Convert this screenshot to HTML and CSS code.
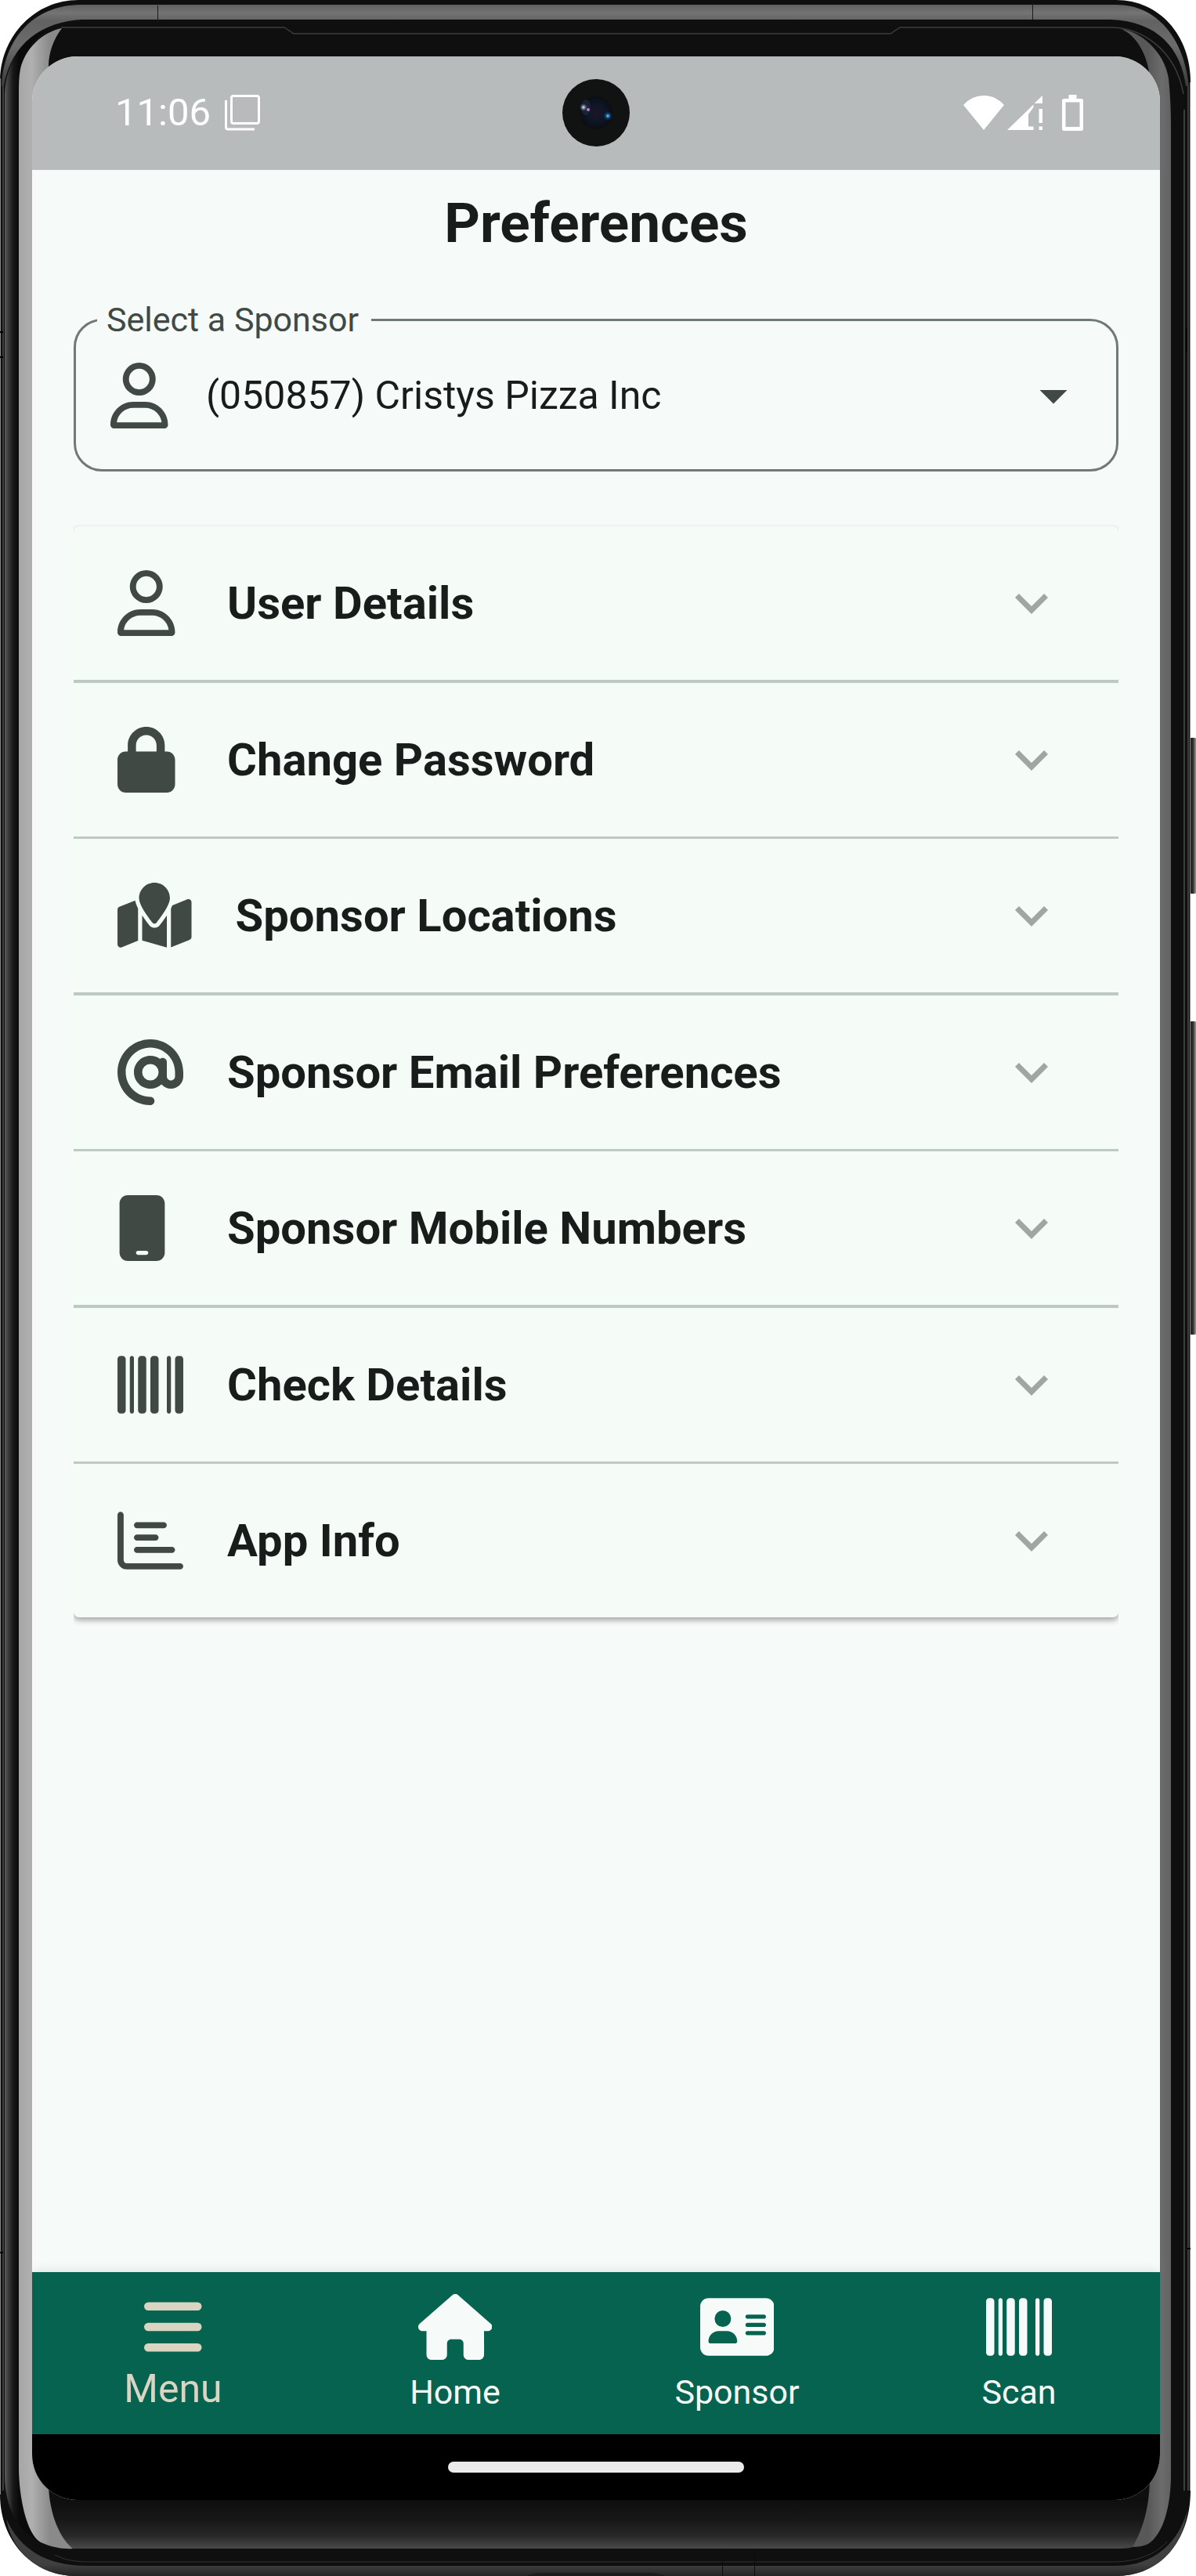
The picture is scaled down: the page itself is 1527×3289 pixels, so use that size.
FILE: index.html
```html
<!DOCTYPE html>
<html lang="en">
<head>
<meta charset="utf-8">
<meta name="viewport" content="width=device-width, initial-scale=1">
<title>Preferences</title>
<link rel="stylesheet" href="styles.css">
</head>
<body>
<div class="device">
  <svg class="device-frame" viewBox="0 0 1527 3289" preserveAspectRatio="none" aria-hidden="true">
    <defs>
      <linearGradient id="rim-top" gradientUnits="userSpaceOnUse" x1="0" y1="6" x2="0" y2="110">
        <stop offset="0" stop-color="#606060"/><stop offset=".1" stop-color="#747474"/><stop offset=".2" stop-color="#626262"/><stop offset=".5" stop-color="#6c6c6c"/><stop offset="1" stop-color="#3a3a3a"/>
      </linearGradient>
      <linearGradient id="side-left" gradientUnits="userSpaceOnUse" x1="6" y1="0" x2="24" y2="0">
        <stop offset="0" stop-color="#5c5c5c"/><stop offset=".25" stop-color="#3c3c3c"/><stop offset=".6" stop-color="#181818"/><stop offset="1" stop-color="#0a0a0a"/>
      </linearGradient>
      <linearGradient id="glass-left" gradientUnits="userSpaceOnUse" x1="24" y1="0" x2="64" y2="0">
        <stop offset="0" stop-color="#a6a6a6"/><stop offset=".4" stop-color="#b0b0b0"/><stop offset="1" stop-color="#8a8a8a"/>
      </linearGradient>
      <linearGradient id="glass-right" gradientUnits="userSpaceOnUse" x1="1466" y1="0" x2="1495" y2="0">
        <stop offset="0" stop-color="#585858"/><stop offset=".6" stop-color="#6c6c6c"/><stop offset="1" stop-color="#626262"/>
      </linearGradient>
      <linearGradient id="chin" gradientUnits="userSpaceOnUse" x1="0" y1="3190" x2="0" y2="3254">
        <stop offset="0" stop-color="#0e0e0e"/><stop offset=".4" stop-color="#161616"/><stop offset=".75" stop-color="#282828"/><stop offset="1" stop-color="#4a4a4a"/>
      </linearGradient>
      <linearGradient id="rim-bottom" gradientUnits="userSpaceOnUse" x1="0" y1="3274" x2="0" y2="3289">
        <stop offset="0" stop-color="#404040"/><stop offset="1" stop-color="#242424"/>
      </linearGradient>
      <linearGradient id="key" x1="0" y1="0" x2="1" y2="0">
        <stop offset="0" stop-color="#1c1c1c"/><stop offset=".5" stop-color="#2a2a2a"/><stop offset=".75" stop-color="#8c8c8c"/><stop offset="1" stop-color="#5a5a5a"/>
      </linearGradient>
    </defs>
    <rect x="1516" y="942" width="14" height="199" rx="5" fill="url(#key)"/>
    <rect x="1516" y="1304" width="14" height="400" rx="5" fill="url(#key)"/>
    <path fill="#0f0f0f" d="M100 0H1425C1480 0 1520 45 1520 105V3180C1520 3245 1480 3289 1425 3289H97C42 3289 0 3245 0 3185V100C2 45 45 0 100 0Z"/>
    <path fill="url(#rim-top)" d="M2 110C5 50 42 7 102 6H1425C1478 6 1512 50 1518 110L1514 110C1508 62 1478 27 1418 25H104C54 28 14 55 5 110Z"/>
    <path fill="none" stroke="#1a1a1a" stroke-width="1" d="M201.500 7V29M1318.500 4V25"/>
    <path fill="none" stroke="#4d4d4d" stroke-width="1.500" d="M4 3180V110M1517 110V3180M1512 3180V140"/>
    <path fill="none" stroke="#8a8a8a" stroke-width="1" d="M.5 100V3185M1519.500 105V3180"/>
    <path fill="url(#side-left)" d="M6 120C8 78 30 48 60 38C38 50 24 80 24 110V3160C24 3200 36 3234 52 3246C22 3232 6 3200 6 3160Z"/>
    <path fill="url(#chin)" d="M62 3190H1470C1468 3215 1458 3240 1446 3252C1440 3254 1430 3254 1420 3254H93C72 3237 62 3205 62 3190Z"/>
    <path fill="url(#glass-left)" d="M79 36C54 41 32 62 26 88C24 98 24 108 24 120V3150C24 3185 33 3235 52 3246C65 3252 80 3255 93 3254C72 3237 62 3200 62 3170V85C62 68 68 50 79 36Z"/>
    <path fill="url(#glass-right)" d="M1431 37C1455 39 1487 66 1492 100C1494 120 1495 140 1495 160V3160C1495 3200 1485 3236 1466 3248C1459 3251 1453 3252 1446 3252C1460 3228 1468 3200 1468 3160V100C1466 70 1450 44 1431 37Z"/>
    <path fill="none" stroke="#3c3c3c" stroke-width="1.500" d="M78 35H363L375 43H1137L1149 35H1420C1455 36 1500 60 1511 120"/>
    <path fill="none" stroke="#333" stroke-width="1" d="M70 3262C85 3270 100 3271 120 3271H1420C1450 3271 1475 3262 1490 3245"/>
    <path fill="url(#rim-bottom)" d="M8 3216C25 3255 60 3276 110 3276H1425C1475 3276 1505 3245 1516 3205C1510 3255 1475 3289 1425 3289H97C50 3289 15 3258 8 3216Z"/>
    <path fill="#1c1c1c" d="M672 3289Q680 3285 695 3285H830Q840 3285 850 3289Z"/>
    <path fill="none" stroke="#0c0c0c" stroke-width="1" d="M922.500 3256V3289M963.500 3256V3289"/>
    <path fill="none" stroke="#000" stroke-width="2" d="M0 424H4M0 456H4M0 2876H4M1515 420V450M1515 2871H1520"/>
  </svg>

  <div class="screen">
    <div class="status-bar">
      <div class="status-left">
        <span class="clock">11:06</span>
        <svg class="status-copy" viewBox="0 0 45 46" aria-hidden="true" fill="none" stroke="#fff" stroke-width="3">
          <rect x="8.500" y="1.500" width="35" height="35" rx="2.500"/>
          <path d="M1.500 7V41.500a2.500 2.500 0 0 0 2.500 2.500H38"/>
        </svg>
      </div>
      <svg class="camera" viewBox="0 0 86 86" aria-hidden="true">
        <defs>
          <radialGradient id="lens"><stop offset="0" stop-color="#1c1626"/><stop offset=".6" stop-color="#0d1626"/><stop offset="1" stop-color="#0c0e10"/></radialGradient>
          <radialGradient id="glint"><stop offset="0" stop-color="#fff"/><stop offset=".4" stop-color="#8d96a8" stop-opacity=".8"/><stop offset="1" stop-color="#4c5a80" stop-opacity="0"/></radialGradient>
          <radialGradient id="blue"><stop offset="0" stop-color="#a8dcff"/><stop offset=".35" stop-color="#12609c"/><stop offset="1" stop-color="#0b2c50" stop-opacity="0"/></radialGradient>
        </defs>
        <circle cx="43" cy="43" r="43" fill="#101312"/>
        <circle cx="43" cy="43" r="21" fill="url(#lens)"/>
        <ellipse cx="30" cy="36" rx="6" ry="10" fill="#27304f" opacity=".5"/>
        <circle cx="27" cy="36" r="5" fill="url(#glint)"/>
        <circle cx="33" cy="39" r="2" fill="#b583c0"/>
        <circle cx="58" cy="47" r="6" fill="url(#blue)"/>
      </svg>
      <div class="status-right">
        <svg class="status-wifi" viewBox="0 0 52 44" aria-hidden="true"><path fill="#fff" d="M26 44L0 12Q11 0 26 0T52 12Z"/></svg>
        <svg class="status-signal" viewBox="0 0 45 44" aria-hidden="true"><path fill="#fff" d="M45 0V10H34.500ZM33.500 11.500V15L27 24V39.500H33.500V44H0ZM40.500 17H45V35H40.500ZM40.500 39.500H45V44H40.500Z"/></svg>
        <svg class="status-battery" viewBox="0 0 27 46" aria-hidden="true"><path fill="#fff" fill-rule="evenodd" d="M8.500 0H18.500V5H24.500A2.500 2.500 0 0 1 27 7.500V43.500A2.500 2.500 0 0 1 24.500 46H2.500A2.500 2.500 0 0 1 0 43.500V7.500A2.500 2.500 0 0 1 2.500 5H8.500ZM4.500 9.500V41H22.500V9.500Z"/></svg>
      </div>
    </div>

    <main class="content">
      <h1 class="title">Preferences</h1>

      <fieldset class="field">
        <legend class="field-legend"><label for="sponsor">Select a Sponsor</label></legend>
        <div class="field-row">
          <span class="icon"><svg viewBox="0 0 448 512" aria-hidden="true"><path d="M304 128a80 80 0 1 0-160 0 80 80 0 1 0 160 0zM96 128a128 128 0 1 1 256 0A128 128 0 1 1 96 128zM49.300 464H398.700c-8.900-63.300-63.300-112-129-112H178.300c-65.700 0-120.100 48.700-129 112zM0 482.300C0 383.800 79.800 304 178.300 304h91.400C368.200 304 448 383.800 448 482.300c0 16.400-13.300 29.700-29.700 29.700H29.700C13.300 512 0 498.700 0 482.300z"/></svg></span>
          <select class="field-select" id="sponsor"><option>(050857) Cristys Pizza Inc</option></select>
          <svg class="field-arrow" viewBox="0 0 24 24" aria-hidden="true"><path d="M7 10l5 5 5-5z"/></svg>
        </div>
      </fieldset>

      <div class="panels">
        <button class="panel" type="button" aria-expanded="false">
          <span class="icon"><svg viewBox="0 0 448 512" aria-hidden="true"><path d="M304 128a80 80 0 1 0-160 0 80 80 0 1 0 160 0zM96 128a128 128 0 1 1 256 0A128 128 0 1 1 96 128zM49.300 464H398.700c-8.900-63.300-63.300-112-129-112H178.300c-65.700 0-120.100 48.700-129 112zM0 482.300C0 383.800 79.800 304 178.300 304h91.400C368.200 304 448 383.800 448 482.300c0 16.400-13.300 29.700-29.700 29.700H29.700C13.300 512 0 498.700 0 482.300z"/></svg></span>
          <span class="panel-title">User Details</span>
          <svg class="chevron" viewBox="0 0 24 24" aria-hidden="true"><path d="M16.590 8.590L12 13.170 7.410 8.590 6 10l6 6 6-6z"/></svg>
        </button>
        <button class="panel" type="button" aria-expanded="false">
          <span class="icon"><svg viewBox="0 0 448 512" aria-hidden="true"><path d="M144 144v48H304V144c0-44.200-35.800-80-80-80s-80 35.800-80 80zM80 192V144C80 64.500 144.500 0 224 0s144 64.500 144 144v48h16c35.300 0 64 28.700 64 64V448c0 35.300-28.700 64-64 64H64c-35.300 0-64-28.700-64-64V256c0-35.300 28.700-64 64-64H80z"/></svg></span>
          <span class="panel-title">Change Password</span>
          <svg class="chevron" viewBox="0 0 24 24" aria-hidden="true"><path d="M16.590 8.590L12 13.170 7.410 8.590 6 10l6 6 6-6z"/></svg>
        </button>
        <button class="panel" type="button" aria-expanded="false">
          <span class="icon"><svg viewBox="0 0 576 512" aria-hidden="true"><path d="M408 120c0 54.600-73.100 151.900-105.200 192c-7.700 9.600-22 9.600-29.600 0C241.100 271.900 168 174.600 168 120C168 53.700 221.700 0 288 0s120 53.700 120 120zm8 80.400c3.500-6.900 6.700-13.800 9.600-20.600c.5-1.200 1-2.500 1.500-3.700l116-46.400C558.900 123.400 576 135 576 152V422.800c0 9.800-6 18.600-15.100 22.300L416 503V200.400zM137.600 138.300c2.400 14.100 7.200 28.300 12.800 41.500c2.900 6.800 6.100 13.700 9.600 20.600V451.800L32.900 502.700C17.100 509 0 497.400 0 480.400V209.600c0-9.800 6-18.600 15.100-22.300l122.600-49zM327.800 332c13.900-17.400 35.700-45.700 56.200-77V504.300L192 449.400V255c20.500 31.300 42.300 59.600 56.200 77c20.500 25.600 59.100 25.600 79.600 0z"/></svg></span>
          <span class="panel-title">Sponsor Locations</span>
          <svg class="chevron" viewBox="0 0 24 24" aria-hidden="true"><path d="M16.590 8.590L12 13.170 7.410 8.590 6 10l6 6 6-6z"/></svg>
        </button>
        <button class="panel" type="button" aria-expanded="false">
          <span class="icon"><svg viewBox="0 0 512 512" aria-hidden="true"><path d="M256 64C150 64 64 150 64 256s86 192 192 192c17.700 0 32 14.300 32 32s-14.300 32-32 32C114.600 512 0 397.400 0 256S114.600 0 256 0S512 114.600 512 256v32c0 53-43 96-96 96c-29.300 0-55.600-13.200-73.200-33.900C320 371.100 289.500 384 256 384c-70.700 0-128-57.300-128-128s57.300-128 128-128c27.900 0 53.700 8.900 74.700 24.100c5.700-5 13.100-8.100 21.300-8.100c17.700 0 32 14.300 32 32v80 32c0 17.700 14.300 32 32 32s32-14.300 32-32V256c0-106-86-192-192-192zm64 192a64 64 0 1 0 -128 0 64 64 0 1 0 128 0z"/></svg></span>
          <span class="panel-title">Sponsor Email Preferences</span>
          <svg class="chevron" viewBox="0 0 24 24" aria-hidden="true"><path d="M16.590 8.590L12 13.170 7.410 8.590 6 10l6 6 6-6z"/></svg>
        </button>
        <button class="panel" type="button" aria-expanded="false">
          <span class="icon"><svg viewBox="0 0 384 512" aria-hidden="true"><path d="M16 64C16 28.700 44.700 0 80 0H304c35.300 0 64 28.700 64 64V448c0 35.300-28.700 64-64 64H80c-35.300 0-64-28.700-64-64V64zM144 448c0 8.800 7.200 16 16 16h64c8.800 0 16-7.200 16-16s-7.200-16-16-16H160c-8.800 0-16 7.200-16 16z"/></svg></span>
          <span class="panel-title">Sponsor Mobile Numbers</span>
          <svg class="chevron" viewBox="0 0 24 24" aria-hidden="true"><path d="M16.590 8.590L12 13.170 7.410 8.590 6 10l6 6 6-6z"/></svg>
        </button>
        <button class="panel" type="button" aria-expanded="false">
          <span class="icon"><svg viewBox="0 0 512 512" aria-hidden="true"><path d="M24 32C10.700 32 0 42.700 0 56V456c0 13.300 10.700 24 24 24H40c13.300 0 24-10.700 24-24V56c0-13.300-10.700-24-24-24H24zm88 0c-8.800 0-16 7.200-16 16V464c0 8.800 7.200 16 16 16s16-7.200 16-16V48c0-8.800-7.200-16-16-16zm72 0c-13.300 0-24 10.700-24 24V456c0 13.300 10.700 24 24 24h16c13.300 0 24-10.700 24-24V56c0-13.300-10.700-24-24-24H184zm96 0c-13.300 0-24 10.700-24 24V456c0 13.300 10.700 24 24 24h16c13.300 0 24-10.700 24-24V56c0-13.300-10.700-24-24-24H280zM448 56V456c0 13.300 10.700 24 24 24h16c13.300 0 24-10.700 24-24V56c0-13.300-10.700-24-24-24H472c-13.300 0-24 10.700-24 24zm-64-8V464c0 8.800 7.200 16 16 16s16-7.200 16-16V48c0-8.800-7.200-16-16-16s-16 7.200-16 16z"/></svg></span>
          <span class="panel-title">Check Details</span>
          <svg class="chevron" viewBox="0 0 24 24" aria-hidden="true"><path d="M16.590 8.590L12 13.170 7.410 8.590 6 10l6 6 6-6z"/></svg>
        </button>
        <button class="panel" type="button" aria-expanded="false">
          <span class="icon"><svg viewBox="0 0 512 512" aria-hidden="true"><path d="M24 32c13.300 0 24 10.700 24 24V408c0 13.300 10.700 24 24 24H488c13.300 0 24 10.700 24 24s-10.700 24-24 24H72c-39.800 0-72-32.200-72-72V56C0 42.700 10.700 32 24 32zM128 136c0-13.300 10.700-24 24-24l208 0c13.300 0 24 10.700 24 24s-10.700 24-24 24l-208 0c-13.300 0-24-10.700-24-24zm24 72H296c13.300 0 24 10.700 24 24s-10.700 24-24 24H152c-13.300 0-24-10.700-24-24s10.700-24 24-24zm0 96H424c13.300 0 24 10.700 24 24s-10.700 24-24 24H152c-13.300 0-24-10.700-24-24s10.700-24 24-24z"/></svg></span>
          <span class="panel-title">App Info</span>
          <svg class="chevron" viewBox="0 0 24 24" aria-hidden="true"><path d="M16.590 8.590L12 13.170 7.410 8.590 6 10l6 6 6-6z"/></svg>
        </button>
      </div>
    </main>

    <nav class="tabs" aria-label="Main">
      <a class="tab tab-current" href="#menu" aria-current="page">
        <span class="tab-icon"><svg viewBox="0 0 448 512" aria-hidden="true"><rect y="64" width="448" height="64" rx="32"/><rect y="224" width="448" height="64" rx="32"/><rect y="384" width="448" height="64" rx="32"/></svg></span>
        <span class="tab-label">Menu</span>
      </a>
      <a class="tab" href="#home">
        <span class="tab-icon"><svg viewBox="0 0 576 512" aria-hidden="true"><path d="M575.800 255.500c0 18-15 32.100-32 32.100h-32l.7 160.200c0 2.700-.2 5.400-.5 8.100V472c0 22.100-17.900 40-40 40H456c-1.100 0-2.200 0-3.300-.1c-1.400 .1-2.800 .1-4.200 .1H416 392c-22.100 0-40-17.900-40-40V448 384c0-17.700-14.300-32-32-32H256c-17.700 0-32 14.300-32 32v64 24c0 22.100-17.900 40-40 40H160 128.100c-1.500 0-3-.1-4.500-.2c-1.200 .1-2.400 .2-3.600 .2H104c-22.100 0-40-17.900-40-40V360c0-.9 0-1.900 .1-2.800V287.600H32c-18 0-32-14-32-32.100c0-9 3-17 10-24L266.400 8c7-7 15-8 22-8s15 2 21 7L564.800 231.500c8 7 12 15 11 24z"/></svg></span>
        <span class="tab-label">Home</span>
      </a>
      <a class="tab" href="#sponsor-card">
        <span class="tab-icon"><svg viewBox="0 0 576 512" aria-hidden="true"><path d="M64 32C28.700 32 0 60.700 0 96V416c0 35.300 28.700 64 64 64H512c35.300 0 64-28.700 64-64V96c0-35.300-28.700-64-64-64H64zm80 256h64c44.200 0 80 35.800 80 80c0 8.800-7.200 16-16 16H80c-8.800 0-16-7.200-16-16c0-44.200 35.800-80 80-80zm-32-96a64 64 0 1 1 128 0 64 64 0 1 1 -128 0zm256-32H496c8.800 0 16 7.200 16 16s-7.200 16-16 16H368c-8.800 0-16-7.200-16-16s7.200-16 16-16zm0 64H496c8.800 0 16 7.200 16 16s-7.200 16-16 16H368c-8.800 0-16-7.200-16-16s7.200-16 16-16zm0 64H496c8.800 0 16 7.200 16 16s-7.200 16-16 16H368c-8.800 0-16-7.200-16-16s7.200-16 16-16z"/></svg></span>
        <span class="tab-label">Sponsor</span>
      </a>
      <a class="tab" href="#scan">
        <span class="tab-icon"><svg viewBox="0 0 512 512" aria-hidden="true"><path d="M24 32C10.700 32 0 42.700 0 56V456c0 13.300 10.700 24 24 24H40c13.300 0 24-10.700 24-24V56c0-13.300-10.700-24-24-24H24zm88 0c-8.800 0-16 7.200-16 16V464c0 8.800 7.200 16 16 16s16-7.200 16-16V48c0-8.800-7.200-16-16-16zm72 0c-13.300 0-24 10.700-24 24V456c0 13.300 10.700 24 24 24h16c13.300 0 24-10.700 24-24V56c0-13.300-10.700-24-24-24H184zm96 0c-13.300 0-24 10.700-24 24V456c0 13.300 10.700 24 24 24h16c13.300 0 24-10.700 24-24V56c0-13.300-10.700-24-24-24H280zM448 56V456c0 13.300 10.700 24 24 24h16c13.300 0 24-10.700 24-24V56c0-13.300-10.700-24-24-24H472c-13.300 0-24 10.700-24 24zm-64-8V464c0 8.800 7.200 16 16 16s16-7.200 16-16V48c0-8.800-7.200-16-16-16s-16 7.200-16 16z"/></svg></span>
        <span class="tab-label">Scan</span>
      </a>
    </nav>
    <div class="gesture-bar"><span class="gesture-handle"></span></div>
  </div>
</div>
</body>
</html>
```
FILE: styles.css
```css
* {
  box-sizing: border-box;
}

body {
  margin: 0;
  background: #fff;
  color: #181d1b;
  font-family: Roboto, "Liberation Sans", sans-serif;
}

/* Phone body */
.device {
  position: relative;
  display: flex;
  min-height: 100vh;
  padding: 72px 46px 97px 41px;
}

.device-frame {
  position: absolute;
  inset: 0;
  width: 100%;
  height: 100%;
}

.screen {
  position: relative;
  flex: 1;
  display: flex;
  flex-direction: column;
  min-width: 0;
  overflow: hidden;
  border-radius: 58px;
  background: #f6faf9;
}

/* System status bar */
.status-bar {
  display: grid;
  grid-template-columns: 1fr auto 1fr;
  align-items: center;
  padding: 29px 98px 30px;
  background: #b7bbbb;
  color: #fff;
}

.status-left,
.status-right {
  display: flex;
  align-items: center;
}

.status-left {
  gap: 18px;
  padding-left: 8px;
}

.status-right {
  justify-content: flex-end;
}

.clock {
  font-size: 49px;
  line-height: 56px;
}

.status-copy {
  width: 45px;
  height: 46px;
}

.camera {
  width: 86px;
  height: 86px;
}

.status-wifi {
  width: 52px;
  height: 44px;
  margin-right: 4px;
}

.status-signal {
  width: 45px;
  height: 44px;
  margin-right: 25px;
}

.status-battery {
  width: 27px;
  height: 46px;
}

/* Page */
.content {
  flex: 1;
  display: flex;
  flex-direction: column;
  padding: 27px 53px;
}

.title {
  margin: 0 0 58px;
  font-size: 71px;
  font-weight: 700;
  line-height: 82px;
  text-align: center;
}

.icon {
  flex: none;
  display: flex;
  min-width: 84px;
}

.icon svg {
  display: block;
  width: auto;
  height: 84px;
  fill: #404944;
}

/* Outlined drop-down */
.field {
  min-width: 0;
  margin: 0 0 70px;
  padding: 0;
  border: 3px solid #6f7975;
  border-radius: 36px;
}

.field-legend {
  margin-left: 27px;
  padding: 0 16px 0 12px;
  color: #404944;
  font-size: 43px;
  line-height: 48px;
}

.field-row {
  display: flex;
  align-items: center;
  gap: 38px;
  padding: 31px 38px 52px 44px;
}

.field-select {
  flex: 1;
  min-width: 0;
  height: 84px;
  margin: 0;
  padding: 0;
  border: 0;
  appearance: none;
  background: none;
  color: #181d1b;
  font-family: inherit;
  font-size: 50px;
}

.field-arrow {
  flex: none;
  width: 84px;
  height: 84px;
  fill: #404944;
}

/* Accordion */
.panels {
  display: flex;
  flex-direction: column;
  border-radius: 7px;
  background: #f5fbf7;
  box-shadow: 0 4px 7px rgba(0, 0, 0, .32), 0 0 2px rgba(0, 0, 0, .06);
  clip-path: inset(-4px 0 -20px);
}

.panel {
  display: flex;
  align-items: center;
  gap: 56px;
  padding: 56px 69px 56px 56px;
  border: 0;
  border-bottom: 3px solid #bfc9c3;
  background: none;
  color: #181d1b;
  font-family: inherit;
  text-align: left;
}

.panel:nth-child(odd) {
  border-bottom-width: 4px;
}

.panel:last-child {
  border-bottom: 0;
}

.panel-title {
  flex: 1;
  font-size: 58px;
  font-weight: 700;
  line-height: 64px;
}

.chevron {
  flex: none;
  width: 84px;
  height: 84px;
  fill: #a0a7a3;
}

/* Bottom navigation */
.tabs {
  display: grid;
  grid-template-columns: repeat(4, 1fr);
  background: #066350;
  box-shadow: 0 0 14px rgba(0, 0, 0, .12);
}

.tab {
  display: flex;
  flex-direction: column;
  align-items: center;
  gap: 8px;
  padding: 28px 0 21px;
  color: #f6faf9;
  font-size: 43px;
  line-height: 66px;
  text-decoration: none;
}

.tab-current {
  color: #dad5c2;
  font-size: 50px;
  line-height: 58px;
}

.tab-icon svg {
  display: block;
  width: auto;
  height: 84px;
  fill: currentColor;
}

/* System gesture area */
.gesture-bar {
  display: flex;
  justify-content: center;
  padding: 35px;
  background: #000;
}

.gesture-handle {
  width: 378px;
  height: 14px;
  border-radius: 7px;
  background: #ebebeb;
}
```
